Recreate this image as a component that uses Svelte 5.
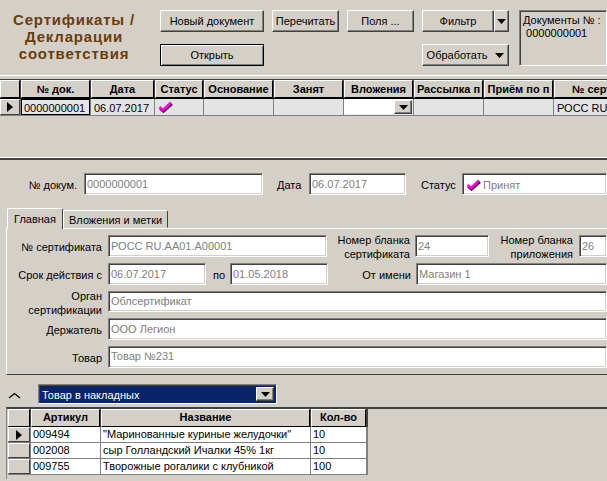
<script>
	const topColumns = [
		{ title: '№ док.', width: 69 },
		{ title: 'Дата', width: 63 },
		{ title: 'Статус', width: 48 },
		{ title: 'Основание', width: 69 },
		{ title: 'Занят', width: 69 },
		{ title: 'Вложения', width: 69 },
		{ title: 'Рассылка п', width: 69 },
		{ title: 'Приём по п', width: 69 },
		{ title: '№ сертификата', width: 122 }
	];

	const goods = [
		{ code: '009494', name: '"Маринованные куриные желудочки"', qty: '10' },
		{ code: '002008', name: 'сыр Голландский Ичалки 45% 1кг', qty: '10' },
		{ code: '009755', name: 'Творожные рогалики с клубникой', qty: '100' }
	];
</script>

{#snippet check()}
	<svg class="check" width="15" height="12" viewBox="0 0 15 12">
		<polyline points="2,7.500 5.500,10.500 14,3" fill="none" stroke="#3a1040" stroke-width="2.500" />
		<polyline points="1.500,6 5,9 13,1.500" fill="none" stroke="#ff00e0" stroke-width="2.500" />
	</svg>
{/snippet}

{#snippet arrow()}
	<svg width="9" height="5" viewBox="0 0 9 5"><path d="M0 0H9L4.500 5Z" fill="#000" /></svg>
{/snippet}

<div class="window">
	<header class="toolbar">
		<h1 class="title">Сертификаты /<br />Декларации<br />соответствия</h1>
		<div class="actions">
			<button class="btn">Новый документ</button>
			<button class="btn">Перечитать</button>
			<button class="btn">Поля ...</button>
			<div class="split">
				<button class="btn grow">Фильтр</button>
				<button class="btn drop">{@render arrow()}</button>
			</div>
			<button class="btn default">Открыть</button>
			<button class="btn process">Обработать {@render arrow()}</button>
		</div>
		<div class="docs">Документы № :<br />&nbsp;0000000001</div>
	</header>

	<section class="top-grid">
		<div class="grid-head">
			<div class="indicator head"></div>
			{#each topColumns as col}
				<div class="head" style="width: {col.width}px">{col.title}</div>
			{/each}
		</div>
		<div class="grid-row">
			<div class="indicator marker"><span class="tri"></span></div>
			<div class="cell selected" style="width: 69px">0000000001</div>
			<div class="cell" style="width: 63px">06.07.2017</div>
			<div class="cell" style="width: 48px">{@render check()}</div>
			<div class="cell" style="width: 69px"></div>
			<div class="cell" style="width: 69px"></div>
			<div class="cell combo-cell" style="width: 69px">
				<span class="mini-combo"><span class="combo-btn">{@render arrow()}</span></span>
			</div>
			<div class="cell" style="width: 69px"></div>
			<div class="cell" style="width: 69px"></div>
			<div class="cell" style="width: 122px">РОСС RU.AA01.A00001</div>
		</div>
	</section>

	<section class="form">
		<div class="doc-row">
			<label class="doc-label">№ докум.</label>
			<div class="input w-doc">0000000001</div>
			<label class="date-label">Дата</label>
			<div class="input w-date">06.07.2017</div>
			<label class="status-label">Статус</label>
			<div class="input status">{@render check()}<span>Принят</span></div>
		</div>

		<div class="tabs">
			<div class="tab active">Главная</div>
			<div class="tab">Вложения и метки</div>
		</div>
		<div class="tab-panel">
			<div class="row">
				<label class="lbl">№ сертификата</label>
				<div class="input w-cert">РОСС RU.AA01.A00001</div>
				<label class="lbl two l-blank">Номер бланка<br />сертификата</label>
				<div class="input w-blank">24</div>
				<label class="lbl two l-app">Номер бланка<br />приложения</label>
				<div class="input fill">26</div>
			</div>
			<div class="row">
				<label class="lbl">Срок действия с</label>
				<div class="input w-term">06.07.2017</div>
				<label class="lbl l-to">по</label>
				<div class="input w-term">01.05.2018</div>
				<label class="lbl l-name">От имени</label>
				<div class="input fill">Магазин 1</div>
			</div>
			<div class="row compact short">
				<label class="lbl two">Орган<br />сертификации</label>
				<div class="input fill">Облсертификат</div>
			</div>
			<div class="row">
				<label class="lbl">Держатель</label>
				<div class="input fill">ООО Легион</div>
			</div>
			<div class="row compact">
				<label class="lbl">Товар</label>
				<div class="input fill">Товар №231</div>
			</div>
		</div>

		<div class="select-row">
			<svg class="chevron" width="13" height="7" viewBox="0 0 13 7">
				<path d="M1 6 L6.500 1.500 L12 6" fill="none" stroke="#000" stroke-width="1.300" />
			</svg>
			<div class="select">
				<span class="select-value">Товар в накладных</span>
				<span class="combo-btn">{@render arrow()}</span>
			</div>
		</div>

		<div class="goods">
			<div class="goods-grid">
				<div class="goods-row">
					<div class="goods-ind head"></div>
					<div class="head g-code">Артикул</div>
					<div class="head g-name">Название</div>
					<div class="head g-qty">Кол-во</div>
				</div>
				{#each goods as item, i}
					<div class="goods-row body">
						<div class="goods-ind marker">{#if i === 0}<span class="tri"></span>{/if}</div>
						<div class="gcell g-code">{item.code}</div>
						<div class="gcell g-name">{item.name}</div>
						<div class="gcell g-qty">{item.qty}</div>
					</div>
				{/each}
			</div>
		</div>
	</section>
</div>

<style>
	:global(body) {
		margin: 0;
		background: #d4d0c8;
	}

	.window {
		width: 607px;
		height: 481px;
		overflow: hidden;
		background: #d4d0c8;
		color: #000;
		font-family: 'Liberation Sans', Arial, sans-serif;
		font-size: 11px;
		line-height: 14px;
	}

	.toolbar {
		display: flex;
		height: 75px;
		box-sizing: border-box;
		padding-top: 10px;
	}

	.title {
		flex: none;
		width: 148px;
		margin: 1px 12px 0 0;
		color: #6b3d0b;
		font-size: 15px;
		font-weight: bold;
		line-height: 17px;
		letter-spacing: 0.8px;
		text-align: center;
	}

	.actions {
		flex: none;
		display: grid;
		grid-template-columns: 104px 67px 67px 87px;
		grid-template-rows: 22px 22px;
		column-gap: 8px;
		row-gap: 12px;
		height: 56px;
	}

	.btn {
		display: flex;
		align-items: center;
		justify-content: center;
		gap: 8px;
		margin: 0;
		padding: 0;
		background: #d4d0c8;
		border: 1px solid;
		border-color: #fff #404040 #404040 #fff;
		box-shadow: inset -1px -1px 0 #808080;
		border-radius: 0;
		font: inherit;
		color: #000;
	}

	.split {
		display: flex;
	}

	.grow {
		flex: 1;
	}

	.drop {
		width: 15px;
	}

	.default {
		grid-column: 1;
		border-color: #000;
		box-shadow:
			inset 1px 1px 0 #fff,
			inset -1px -1px 0 #808080;
	}

	.process {
		grid-column: 4;
	}

	.docs {
		flex: none;
		width: 88px;
		height: 56px;
		box-sizing: border-box;
		margin-left: 10px;
		padding: 3px 3px;
		border: 1px solid;
		border-color: #808080 #fff #fff #808080;
		box-shadow: inset 1px 1px 0 #404040;
		line-height: 13px;
		white-space: nowrap;
		overflow: hidden;
	}

	.top-grid {
		height: 83px;
		box-sizing: border-box;
		padding-top: 3px;
		border-top: 1px solid #fff;
		border-bottom: 1px solid #fff;
	}

	.grid-head {
		display: flex;
		gap: 1px;
		height: 20px;
		box-sizing: border-box;
		border-top: 1px solid #404040;
		border-bottom: 1px solid #000;
		background: #404040;
	}

	.head {
		box-sizing: border-box;
		flex: none;
		padding-top: 1px;
		background: #d4d0c8;
		border: 1px solid;
		border-color: #fff #000 #000 #fff;
		font-weight: bold;
		text-align: center;
		line-height: 15px;
		white-space: nowrap;
		overflow: hidden;
	}

	.indicator {
		width: 20px;
		flex: none;
	}

	.grid-row {
		display: flex;
		gap: 1px;
		height: 17px;
		box-sizing: border-box;
		background: #808080;
		border-bottom: 1px solid #808080;
	}

	.marker {
		box-sizing: border-box;
		display: flex;
		align-items: center;
		justify-content: center;
		background: #d4d0c8;
		border: 1px solid;
		border-color: #fff #404040 #404040 #fff;
	}

	.tri {
		width: 0;
		height: 0;
		border-style: solid;
		border-width: 5px 0 5px 6px;
		border-color: transparent transparent transparent #000;
	}

	.cell {
		box-sizing: border-box;
		flex: none;
		padding: 0 3px;
		background: #e4e4e4;
		line-height: 18px;
		white-space: nowrap;
		overflow: hidden;
	}

	.selected {
		border: 1px solid #000;
		line-height: 16px;
		padding: 0 2px;
	}

	.check {
		display: block;
		flex: none;
		margin-top: 2px;
	}

	.combo-cell {
		padding: 0;
		background: #fff;
		border: 1px solid;
		border-color: #fff #e8e8e8 #e8e8e8 #fff;
	}

	.mini-combo {
		display: flex;
		justify-content: flex-end;
		height: 100%;
	}

	.combo-btn {
		display: flex;
		align-items: center;
		justify-content: center;
		width: 18px;
		box-sizing: border-box;
		background: #d4d0c8;
		border: 1px solid;
		border-color: #fff #404040 #404040 #fff;
		box-shadow: inset -1px -1px 0 #808080;
	}

	.form {
		border-top: 2px solid #404040;
	}

	.doc-row {
		display: flex;
		align-items: flex-start;
		height: 35px;
		padding-top: 13px;
	}

	.doc-row label {
		flex: none;
		line-height: 25px;
	}

	.doc-label {
		width: 77px;
		margin-right: 7px;
		text-align: right;
	}

	.date-label {
		width: 25px;
		margin: 0 7px 0 14px;
	}

	.status-label {
		width: 35px;
		margin: 0 6px 0 15px;
	}

	.input {
		box-sizing: border-box;
		height: 22px;
		flex: none;
		padding: 3px 2px 0;
		background: #fff;
		color: #808080;
		border: 1px solid;
		border-color: #808080 #fff #fff #808080;
		box-shadow:
			inset 1px 1px 0 #404040,
			inset -1px -1px 0 #d4d0c8;
		line-height: 14px;
		white-space: nowrap;
		overflow: hidden;
	}

	.w-doc {
		width: 179px;
	}

	.w-date {
		width: 97px;
	}

	.status {
		display: flex;
		gap: 2px;
		width: 145px;
		padding-left: 3px;
	}

	.status span {
		line-height: 17px;
	}

	.tabs {
		display: flex;
		padding-left: 7px;
		height: 20px;
		position: relative;
		z-index: 1;
	}

	.tab {
		box-sizing: border-box;
		height: 18px;
		margin-top: 2px;
		padding: 2px 5px;
		border: 1px solid;
		border-color: #fff #404040 #d4d0c8 #fff;
		border-radius: 2px 2px 0 0;
	}

	.tab.active {
		width: 56px;
		height: 21px;
		margin-top: 0;
		padding: 3px 0 0;
		background: #d4d0c8;
		border-bottom: none;
		text-align: center;
	}

	.tab-panel {
		box-sizing: border-box;
		display: flex;
		flex-direction: column;
		gap: 6px;
		height: 147px;
		margin-left: 6px;
		padding-top: 6px;
		border-top: 1px solid #fff;
		border-left: 1px solid #fff;
		border-bottom: 1px solid #404040;
	}

	.row {
		display: flex;
		align-items: center;
		height: 22px;
		flex: none;
	}

	.short {
		height: 21px;
	}

	.short .input {
		height: 21px;
	}

	.compact .input {
		padding-top: 2px;
	}

	.lbl {
		flex: none;
		width: 95px;
		margin: 2px 6px 0 0;
		text-align: right;
		white-space: nowrap;
	}

	.two {
		line-height: 14px;
	}

	.l-blank {
		width: 83px;
		margin-right: 5px;
	}

	.l-app {
		width: 84px;
		margin-right: 6px;
	}

	.l-to {
		width: 19px;
		margin-right: 5px;
	}

	.l-name {
		width: 83px;
		margin-right: 5px;
	}

	.w-cert {
		width: 219px;
	}

	.w-blank {
		width: 74px;
	}

	.w-term {
		width: 98px;
	}

	.fill {
		flex: 1;
	}

	.select-row {
		display: flex;
		align-items: center;
		height: 20px;
		margin-top: 9px;
		padding-left: 8px;
	}

	.chevron {
		margin-top: 3px;
		margin-right: 17px;
	}

	.select {
		display: flex;
		box-sizing: border-box;
		width: 239px;
		height: 20px;
		padding: 2px;
		background: #0a246a;
		border: 1px solid;
		border-color: #808080 #fff #fff #808080;
		box-shadow: inset 1px 1px 0 #404040;
	}

	.select-value {
		flex: 1;
		padding-left: 1px;
		color: #fff;
		line-height: 17px;
	}

	.goods {
		margin-top: 3px;
		height: 70px;
		margin-left: 6px;
		padding-left: 1px;
		border-top: 2px solid #404040;
		border-left: 1px solid #808080;
	}

	.goods-grid {
		display: flex;
		flex-direction: column;
		width: 360px;
		gap: 0;
	}

	.goods-row {
		display: grid;
		grid-template-columns: 22px 69px 209px 55px;
		column-gap: 1px;
		height: 18px;
		background: #404040;
	}

	.goods-row.body {
		height: 15px;
		background: #808080;
		border-bottom: 1px solid #808080;
		box-sizing: content-box;
	}

	.goods-ind {
		box-sizing: border-box;
	}

	.goods-row .head {
		padding-top: 0;
		line-height: 15px;
	}

	.gcell {
		padding: 0 2px;
		background: #fff;
		line-height: 15px;
		white-space: nowrap;
		overflow: hidden;
	}
</style>
